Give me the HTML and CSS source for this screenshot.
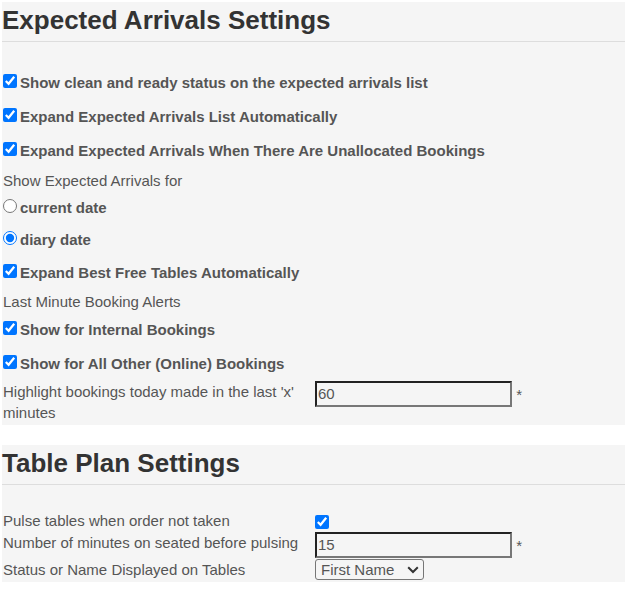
FILE: index.html
```html
<!DOCTYPE html>
<html lang="en">
<head>
<meta charset="utf-8">
<title>Settings</title>
<link rel="stylesheet" href="styles.css">
</head>
<body>
<div class="page">
  <section class="panel">
    <h2 class="panel-title">Expected Arrivals Settings</h2>
    <div class="panel-body">
      <label class="opt"><input type="checkbox" checked>Show clean and ready status on the expected arrivals list</label>
      <label class="opt"><input type="checkbox" checked>Expand Expected Arrivals List Automatically</label>
      <label class="opt"><input type="checkbox" checked>Expand Expected Arrivals When There Are Unallocated Bookings</label>
      <div class="note">Show Expected Arrivals for</div>
      <label class="opt radio"><input type="radio" name="ea-date">current date</label>
      <label class="opt radio"><input type="radio" name="ea-date" checked>diary date</label>
      <label class="opt"><input type="checkbox" checked>Expand Best Free Tables Automatically</label>
      <div class="note">Last Minute Booking Alerts</div>
      <label class="opt"><input type="checkbox" checked>Show for Internal Bookings</label>
      <label class="opt"><input type="checkbox" checked>Show for All Other (Online) Bookings</label>
      <div class="form-grid">
        <div class="cell-label">Highlight bookings today made in the last 'x' minutes</div>
        <div class="cell-value"><input class="num" type="text" value="60"> *</div>
      </div>
    </div>
  </section>
  <section class="panel">
    <h2 class="panel-title">Table Plan Settings</h2>
    <div class="panel-body table-body">
      <div class="form-grid">
        <div class="cell-label">Pulse tables when order not taken</div>
        <div class="cell-value"><input class="cell-check" type="checkbox" checked></div>
        <div class="cell-label">Number of minutes on seated before pulsing</div>
        <div class="cell-value"><input class="num" type="text" value="15"> *</div>
        <div class="cell-label">Status or Name Displayed on Tables</div>
        <div class="cell-value">
          <span class="pick-wrap">
            <select class="pick">
              <option selected>First Name</option>
              <option>Status</option>
            </select>
            <svg class="pick-arrow" width="12" height="8" viewBox="0 0 12 8" aria-hidden="true"><polyline points="1.2,1.3 6,6 10.8,1.3" fill="none" stroke="#333" stroke-width="2"/></svg>
          </span>
        </div>
      </div>
    </div>
  </section>
</div>
</body>
</html>
```
FILE: styles.css
```css
html, body {
  margin: 0;
  background: #ffffff;
}

body {
  font-family: "Liberation Sans", Arial, sans-serif;
  font-size: 15px;
  line-height: 1.42857;
  color: #555555;
}

.page {
  padding: 2px 0 0 2px;
}

.panel {
  background: #f5f5f5;
}

.panel + .panel {
  margin-top: 20px;
}

.panel-title {
  margin: 0;
  padding: 3px 0 5px 0;
  font-size: 26px;
  line-height: normal;
  font-weight: bold;
  color: #333333;
  border-bottom: 1px solid #dddddd;
}

.panel-body {
  display: flex;
  flex-direction: column;
  padding: 24.5px 0 1px 1px;
}

.table-body {
  padding-top: 25px;
  padding-bottom: 2px;
}

.opt {
  display: block;
  margin: 5px 0 8px 0;
  font-weight: bold;
}

.opt.radio {
  margin: 5px 0 7px 0;
}

.opt.radio + .opt.radio {
  margin-top: 3px;
}

.note + .opt {
  margin-top: 6px;
}

.opt + .form-grid {
  margin-top: -2px;
}

.opt input {
  width: 14px;
  height: 14px;
  margin: 0 3px 0 0;
  vertical-align: baseline;
}

.note {
  margin: 0;
}

.form-grid {
  display: grid;
  grid-template-columns: 312px 1fr;
  row-gap: 1px;
}

.cell-value {
  white-space: nowrap;
}

.num {
  box-sizing: border-box;
  width: 197px;
  height: 26px;
  padding: 1px;
  border: 2px solid;
  border-color: #222222 #777777 #777777 #222222;
  background: transparent;
  font-family: "Liberation Sans", Arial, sans-serif;
  font-size: 15px;
  color: #555555;
  vertical-align: baseline;
}

.cell-check {
  display: block;
  width: 14px;
  height: 14px;
  margin: 5px 0 0 0;
}

.pick-wrap {
  position: relative;
  display: block;
  width: 109px;
}

.pick {
  display: block;
  box-sizing: border-box;
  width: 109px;
  height: 21px;
  padding: 0 20px 0 5px;
  border: 1px solid #767676;
  border-radius: 3px;
  background-color: transparent;
  -webkit-appearance: none;
  appearance: none;
  font-family: "Liberation Sans", Arial, sans-serif;
  font-size: 15px;
  line-height: 19px;
  color: #555555;
}

.pick-arrow {
  position: absolute;
  left: 92px;
  top: 7px;
  pointer-events: none;
}
```
